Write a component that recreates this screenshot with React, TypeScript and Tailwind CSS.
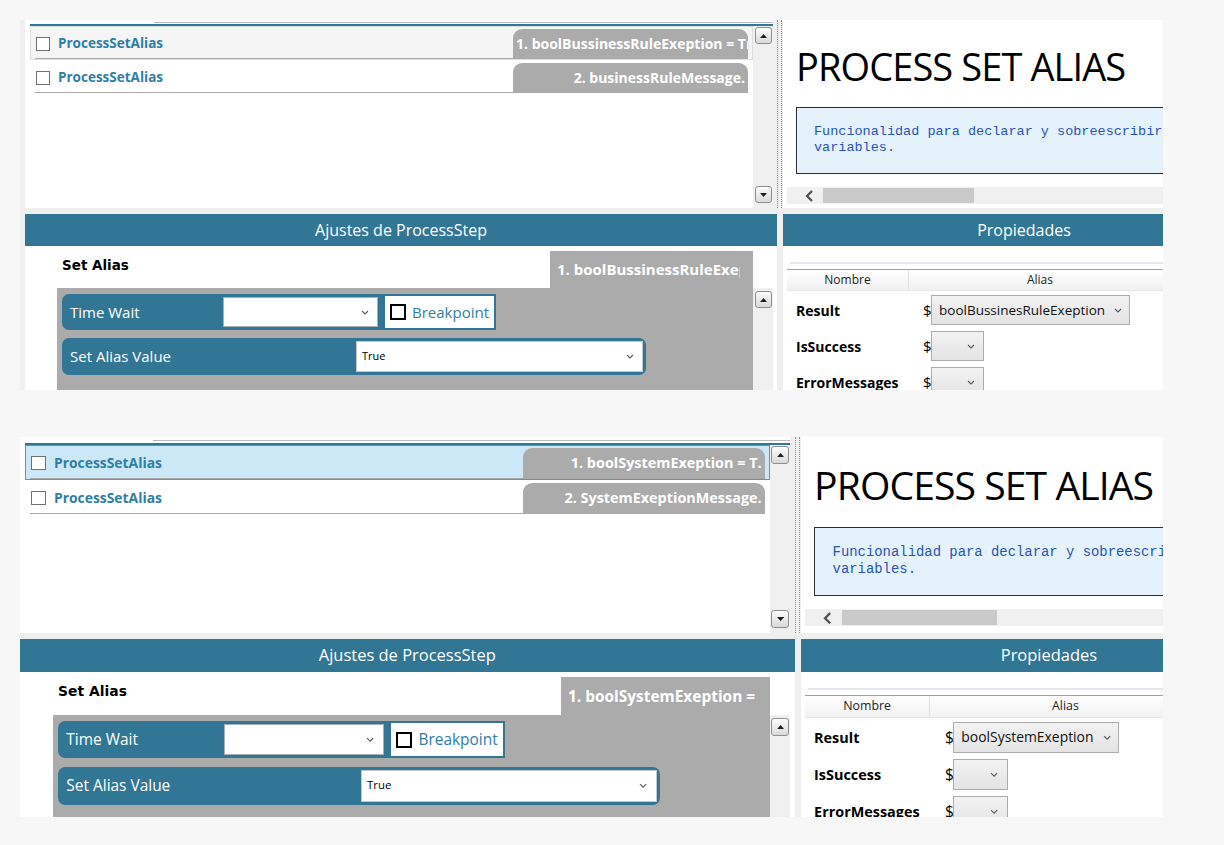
import React from 'react';

function Chevron() {
  return (
    <svg width="8" height="5" viewBox="0 0 8 5" className="shrink-0">
      <path d="M1 1l3 3 3-3" fill="none" stroke="#5a5a5a" strokeWidth="1.1" />
    </svg>
  );
}

function ScrollButton({ up }: { up?: boolean }) {
  return (
    <div className="mx-auto flex h-[17px] w-[17px] items-center justify-center rounded-[3px] border border-[#8e8e8e] bg-linear-to-b from-[#fdfdfd] to-[#d9d9d9]">
      <svg width="7" height="4" viewBox="0 0 7 4">
        <path d={up ? 'M0 4L3.5 0L7 4Z' : 'M0 0L3.5 4L7 0Z'} fill="#1e1e1e" />
      </svg>
    </div>
  );
}

function ListRow({ tag, selected }: { tag: string; selected?: string }) {
  return (
    <div className={`h-[34px] border px-[4px] pt-[2px] ${selected ?? 'border-transparent'}`}>
      <div className="flex h-[30px] border-b border-[#a9a9a9]">
        <div className="flex flex-1 items-center gap-[8px] pl-px">
          <span className="block h-[14px] w-[14px] border border-[#707070] bg-white" />
          <span className="text-[13.5px] font-bold text-[#2f7ea5]">ProcessSetAlias</span>
        </div>
        <div className="flex w-[235px] overflow-hidden rounded-t-[9px] bg-[#ababab] px-[3px] text-[14px] font-bold leading-[29px] text-white">
          <span className="ml-auto shrink-0 whitespace-nowrap">{tag}</span>
        </div>
      </div>
    </div>
  );
}

function Header({ children, wide }: { children: React.ReactNode; wide?: boolean }) {
  return (
    <div
      className={`h-[32px] shrink-0 bg-[#317694] text-center text-[16px] leading-[32px] text-white ${wide ? 'w-[482px]' : ''}`}
    >
      {children}
    </div>
  );
}

function PropRow({ name, value }: { name: string; value?: string }) {
  return (
    <div className="mb-[6px] flex h-[30px] items-center">
      <div className="w-[140px] shrink-0 pl-[13px] text-[14px] font-bold text-black">{name}</div>
      <span className="w-[8px] shrink-0 text-[15px] text-black">$</span>
      <div
        className={`flex h-[30px] items-center border border-[#acacac] bg-linear-to-b from-[#f3f3f3] to-[#e3e3e3] ${
          value ? 'gap-[9px] pl-[7px] pr-[7px]' : 'w-[53px] justify-end pr-[8px]'
        }`}
      >
        {value && <span className="whitespace-nowrap text-[13.5px] text-[#111]">{value}</span>}
        <Chevron />
      </div>
    </div>
  );
}

type ScreenProps = {
  selected: string;
  tags: [string, string];
  tab: string;
  alias: string;
  strip?: boolean;
  tall?: boolean;
  className: string;
};

function Screen({ selected, tags, tab, alias, strip, tall, className }: ScreenProps) {
  return (
    <div className={`flex overflow-hidden ${className}`}>
      {strip && <div className="w-[5px] shrink-0 bg-[#efefef]" />}
      <div className="flex min-w-0 flex-1 flex-col">
        {/* steps list + description */}
        <div className={`flex shrink-0 ${tall ? 'h-[190px]' : 'h-[188px]'}`}>
          <div className="flex w-[748px] shrink-0 flex-col bg-white">
            <div className={`pl-[129px] ${tall ? 'pt-[3px]' : 'pt-[2px]'}`}>
              <div className="h-px bg-[#b9b9b9]" />
            </div>
            <div className={`ml-[5px] h-[2px] bg-[#2f7898] ${tall ? 'mt-[2px]' : 'mt-px'}`} />
            <div className="flex min-h-0 flex-1">
              <div className="flex-1 pl-[5px]">
                <ListRow tag={tags[0]} selected={selected} />
                <ListRow tag={tags[1]} />
              </div>
              <div className="flex w-[20px] flex-col justify-between bg-[#f0f0f0] pb-[5px] pt-px">
                <ScrollButton up />
                <ScrollButton />
              </div>
            </div>
          </div>
          <div className="flex w-[10px] shrink-0 bg-[#f0f0f0] pl-[4px]">
            <div className="w-[5px] border-x border-dotted border-[#8c8c8c]" />
          </div>
          <div className="flex min-w-0 flex-1 flex-col overflow-hidden bg-white">
            <div className="ml-[13px] mt-[27px] whitespace-nowrap text-[38px] leading-[38px] tracking-[-0.9px] text-black">
              PROCESS SET ALIAS
            </div>
            <div className="ml-[13px] mt-[22px] h-[67px] w-[460px] shrink-0 whitespace-nowrap border border-[#2d2d2d] bg-[#e4f2fb] pl-[17px] pt-[16px] font-['Liberation_Mono',monospace] text-[13.5px] leading-[16px] text-[#2a52be]">
              Funcionalidad para declarar y sobreescribir
              <br />
              variables.
            </div>
            <div className="ml-[4px] mt-[13px] flex h-[17px] w-[460px] shrink-0 items-center bg-[#f0f0f0]">
              <svg width="9" height="12" viewBox="0 0 9 12" className="ml-[18px]">
                <path d="M7 1L2 6l5 5" fill="none" stroke="#505050" strokeWidth="2.2" />
              </svg>
              <div className="ml-[9px] h-[15px] w-[151px] bg-[#c9c9c9]" />
            </div>
          </div>
        </div>

        <div className="h-[6px] shrink-0 bg-[#efefef]" />

        {/* settings + properties */}
        <div className="flex min-h-0 flex-1">
          <div className="flex w-[752px] shrink-0 flex-col">
            <Header>Ajustes de ProcessStep</Header>
            <div className="flex flex-1 flex-col bg-white">
              <div className="flex h-[42px] shrink-0">
                <div className="flex-1 pl-[37px] pt-[11px] font-['DejaVu_Sans',sans-serif] text-[13.5px] font-bold leading-[16px] text-black">
                  Set Alias
                </div>
                <div className="mr-[24px] mt-[5px] w-[203px] bg-[#ababab] pl-[7px] pr-[13px] text-[15px] font-bold leading-[37px] text-white">
                  <div className="overflow-hidden whitespace-nowrap">{tab}</div>
                </div>
              </div>
              <div className="flex flex-1">
                <div className="ml-[32px] flex-1 bg-[#ababab] pl-[5px] pt-[6px]">
                  <div className="flex h-[36px] w-[434px] items-center rounded-[7px] bg-[#317694]">
                    <div className="w-[161px] pl-[8px] text-[15px] text-white">Time Wait</div>
                    <div className="flex h-[30px] w-[155px] items-center justify-end border border-[#abadb3] bg-white pr-[8px]">
                      <Chevron />
                    </div>
                    <div className="ml-[5px] flex h-[36px] flex-1 items-center gap-[6px] border-2 border-[#317694] bg-white pl-[5px]">
                      <span className="block h-[16px] w-[16px] border-2 border-black" />
                      <span className="text-[15px] text-[#2f7ea5]">Breakpoint</span>
                    </div>
                  </div>
                  <div className="mt-[8px] flex h-[37px] w-[584px] items-center rounded-[7px] bg-[#317694] pr-[3px]">
                    <div className="flex-1 pl-[8px] text-[15px] text-white">Set Alias Value</div>
                    <div className="flex h-[31px] w-[287px] items-center justify-between border border-[#c4c6cc] bg-white pl-[5px] pr-[8px] text-[11px] text-black">
                      <span>True</span>
                      <Chevron />
                    </div>
                  </div>
                </div>
                <div className="w-[20px] bg-[#f0f0f0] pt-[3px]">
                  <ScrollButton up />
                </div>
                <div className="w-[4px] bg-white" />
              </div>
            </div>
          </div>

          <div className="w-[6px] shrink-0 bg-[#efefef]" />

          <div className="flex min-w-0 flex-1 flex-col overflow-hidden">
            <Header wide>Propiedades</Header>
            <div className="w-[482px] flex-1 bg-white">
              <div className="ml-[7px] mt-[16px] h-[2px] bg-[#e2e8ed]" />
              <div className="ml-[4px] mt-[5px] w-[384px] border-t border-[#a0a0a0]">
                <div className="flex h-[21px] border-b border-[#e6e6e6] bg-linear-to-b from-white to-[#f1f1f1] text-[12px] leading-[20px] text-[#222]">
                  <div className="w-[122px] border-r border-[#e0e0e0] text-center">Nombre</div>
                  <div className="flex-1 text-center">Alias</div>
                </div>
              </div>
              <div className="pt-[4px]">
                <PropRow name="Result" value={alias} />
                <PropRow name="IsSuccess" />
                <PropRow name="ErrorMessages" />
              </div>
            </div>
          </div>
        </div>
      </div>
    </div>
  );
}

export default function App() {
  return (
    <div className="flex min-h-screen flex-col gap-[47px] bg-[#f7f7f7] pl-[20px] pt-[20px] font-['Open_Sans',sans-serif]">
      <Screen
        strip
        className="h-[370px] w-[1143px]"
        selected="border-[#dedede] bg-[#f5f5f5]"
        tags={['1. boolBussinessRuleExeption = True', '2. businessRuleMessage.']}
        tab="1. boolBussinessRuleExeption = True"
        alias="boolBussinesRuleExeption"
      />
      <Screen
        tall
        className="h-[369px] w-[1110px] [zoom:1.03]"
        selected="border-[#3b9fd9] bg-[#cce8f6]"
        tags={['1. boolSystemExeption = T.', '2. SystemExeptionMessage.']}
        tab="1. boolSystemExeption ="
        alias="boolSystemExeption"
      />
    </div>
  );
}
